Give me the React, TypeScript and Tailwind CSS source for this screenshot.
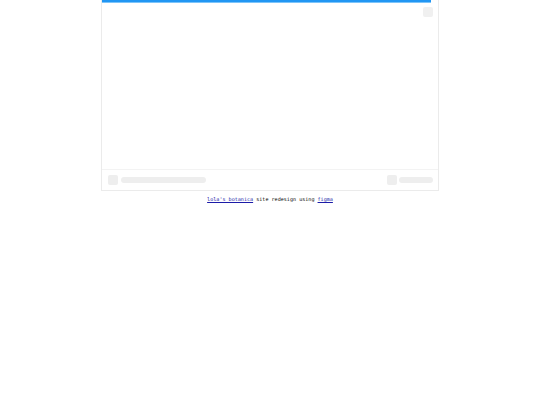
import React from "react";

export default function App() {
  return (
    <div className="w-[540px] h-[405px] bg-white" style={{ fontFamily: '"DejaVu Sans Mono", "Liberation Mono", monospace' }}>
      <div className="relative mx-auto w-[338px] h-[191px] border-x border-b border-[#ebebeb] flex flex-col bg-white">
        <div className="absolute left-0 top-0 h-[3px] w-[329px] bg-[#2196f3] border-b border-[#7cc4fa]" />
        <div className="flex-1 flex justify-end pt-[7px] pr-[5px]">
          <div className="w-[10px] h-[10px] rounded-[2px] bg-[#f0f0f0]" />
        </div>
        <div className="h-[21px] border-t border-[#f3f3f3] flex items-center pl-[6px] pr-[5px]">
          <div className="w-[10px] h-[10px] rounded-[2px] bg-[#eeeeee]" />
          <div className="ml-[3px] w-[85px] h-[6px] rounded-full bg-[#eeeeee]" />
          <div className="flex-1" />
          <div className="w-[10px] h-[10px] rounded-[2px] bg-[#eeeeee]" />
          <div className="ml-[2px] w-[34px] h-[6px] rounded-full bg-[#eeeeee]" />
        </div>
      </div>
      <p className="mt-[4px] text-center text-[5.1px] leading-[8px] text-black">
        <a href="#" className="text-[#1c1ca8] underline">lola's botanica</a> site redesign using{" "}
        <a href="#" className="text-[#1c1ca8] underline">figma</a>
      </p>
    </div>
  );
}
